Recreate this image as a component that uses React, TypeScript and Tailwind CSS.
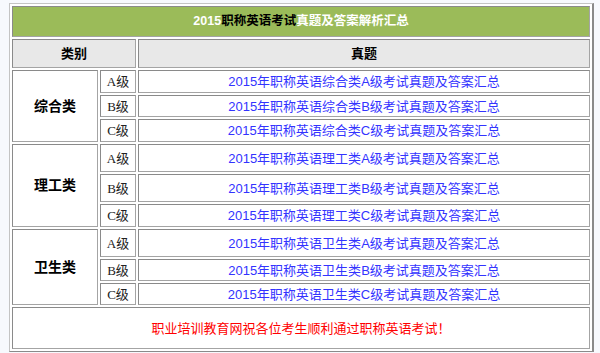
import React from 'react';

type Group = { name: string; levels: string[] };

const groups: Group[] = [
    { name: '综合类', levels: ['A', 'B', 'C'] },
    { name: '理工类', levels: ['A', 'B', 'C'] },
    { name: '卫生类', levels: ['A', 'B', 'C'] },
];

// inset-looking cell border, like an old border="1" table
const cell =
    'flex items-center justify-center border border-t-[#8a8a8a] border-l-[#8a8a8a] border-b-[#a4a4a4] border-r-[#a4a4a4] leading-[15px]';

const App: React.FC = () => {
    return (
        <div className="h-[353px] w-[600px] bg-[#f7f9fd] pt-[3px] pl-[9px] font-['Liberation_Sans','Noto_Sans_CJK_SC',sans-serif]">
            <div className="grid w-[585px] grid-cols-[86px_36px_1fr] grid-rows-[31px_29px_23px_22px_23px_28px_28px_23px_28px_22px_22px_42px] gap-[2px] border border-t-[#c4c4c4] border-l-[#c4c4c4] border-b-[#8a8a8a] border-r-[#8a8a8a] border-r-2 bg-white p-[2px]">
                <div className={`${cell} col-span-3 bg-[#9bbb59] text-[12.5px] font-bold`}>
                    <span className="text-white">2015</span>
                    <span className="text-black">职称英语考试</span>
                    <span className="text-white">真题及答案解析汇总</span>
                </div>

                <div className={`${cell} col-span-2 bg-[#e8e8e8] text-[13px] font-bold text-black`}>类别</div>
                <div className={`${cell} bg-[#e8e8e8] text-[13px] font-bold text-black`}>真题</div>

                {groups.map(g => (
                    <React.Fragment key={g.name}>
                        <div className={`${cell} row-span-3 text-[14px] font-bold text-black`}>{g.name}</div>
                        {g.levels.map(lv => (
                            <React.Fragment key={lv}>
                                <div className={`${cell} col-start-2 text-[13px] text-[#222] font-['Liberation_Serif','Noto_Sans_CJK_SC',serif]`}>
                                    {lv}级
                                </div>
                                <div className={`${cell} text-[13px] text-[#3333ff]`}>
                                    2015年职称英语{g.name}{lv}级考试真题及答案汇总
                                </div>
                            </React.Fragment>
                        ))}
                    </React.Fragment>
                ))}

                <div className={`${cell} col-span-3 text-[13px] text-[#ff0000]`}>
                    职业培训教育网祝各位考生顺利通过职称英语考试！
                </div>
            </div>
        </div>
    );
};

export default App;
